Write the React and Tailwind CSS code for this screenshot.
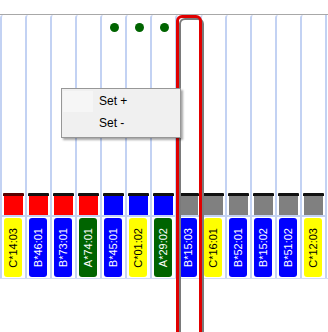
import React from "react";

const items = [
  { label: "C*14:03", pill: "bg-[#ffff00] text-black", bar: "bg-[#ff0000]", cap: "bg-[#5a0000]", dot: false },
  { label: "B*46:01", pill: "bg-[#0000ff] text-white", bar: "bg-[#ff0000]", cap: "bg-[#111111]", dot: false },
  { label: "B*73:01", pill: "bg-[#0000ff] text-white", bar: "bg-[#ff0000]", cap: "bg-[#111111]", dot: false },
  { label: "A*74:01", pill: "bg-[#006400] text-white", bar: "bg-[#ff0000]", cap: "bg-[#111111]", dot: false },
  { label: "B*45:01", pill: "bg-[#0000ff] text-white", bar: "bg-[#0000ff]", cap: "bg-[#111111]", dot: true },
  { label: "C*01:02", pill: "bg-[#ffff00] text-black", bar: "bg-[#0000ff]", cap: "bg-[#111111]", dot: true },
  { label: "A*29:02", pill: "bg-[#006400] text-white", bar: "bg-[#0000ff]", cap: "bg-[#111111]", dot: true },
  { label: "B*15:03", pill: "bg-[#0000ff] text-white", bar: "bg-[#808080]", cap: "bg-[#111111]", dot: false },
  { label: "C*16:01", pill: "bg-[#ffff00] text-black", bar: "bg-[#808080]", cap: "bg-[#111111]", dot: false },
  { label: "B*52:01", pill: "bg-[#0000ff] text-white", bar: "bg-[#808080]", cap: "bg-[#111111]", dot: false },
  { label: "B*15:02", pill: "bg-[#0000ff] text-white", bar: "bg-[#808080]", cap: "bg-[#111111]", dot: false },
  { label: "B*51:02", pill: "bg-[#0000ff] text-white", bar: "bg-[#808080]", cap: "bg-[#111111]", dot: false },
  { label: "C*12:03", pill: "bg-[#ffff00] text-black", bar: "bg-[#808080]", cap: "bg-[#111111]", dot: false },
];

function Column({ it }) {
  return (
    <div className="w-[25px] shrink-0 flex flex-col border-l-2 border-[#c3d2f3] rounded-tl-[3px]">
      <div className="h-[178px] flex justify-center pt-[8px]">
        {it.dot && <div className="w-[9px] h-[9px] rounded-full bg-[#006400] ml-[1px]" />}
      </div>
      <div className="h-[24px] flex flex-col border-b-2 border-[#c3d2f3] -ml-[2px] pl-[2px]">
        <div className={`w-[21px] h-[3px] ml-[1px] rounded-t-[1px] ${it.cap}`} />
        <div className={`w-[19px] h-[19px] ml-[2px] ${it.bar}`} />
      </div>
      <div className="h-[61px] pt-[1px]">
        <div
          className={`w-[18px] h-[59px] ml-[2px] rounded-[3px] flex items-center justify-center ${it.pill}`}
        >
          <span className="[writing-mode:vertical-rl] rotate-180 text-[11px] leading-none font-['Liberation_Sans',Arial,sans-serif] whitespace-nowrap">
            {it.label}
          </span>
        </div>
      </div>
    </div>
  );
}

export default function App() {
  return (
    <div className="relative w-[328px] h-[332px] overflow-hidden bg-white font-['Liberation_Sans',Arial,sans-serif]">
      <div className="h-[15px] border-b border-[#a8a8a8]" />
      <div className="flex h-[264px] border-b border-[#d3ddf6]">
        {items.map((it) => (
          <Column key={it.label} it={it} />
        ))}
        <div className="w-[3px] border-l-2 border-[#c3d2f3]" />
      </div>

      {/* highlight frame shadow */}
      <div className="absolute left-[179px] top-[18px] w-[25px] h-[330px] border-2 border-[#7a7a7a] rounded-t-[6px]" />
      {/* highlight frame */}
      <div className="absolute left-[176px] top-[15px] w-[26px] h-[330px] border-[3px] border-[#e10000] rounded-t-[6px]" />

      {/* context menu */}
      <div className="absolute left-[61px] top-[88px] w-[120px] h-[50px] bg-[#f0f0f0] border border-[#979797] shadow-[2px_2px_2px_rgba(0,0,0,0.35)] pt-[1px]">
        <div className="relative h-[22px] flex items-center pl-[37px] text-[12px] text-black">
          <div className="absolute left-[1px] top-[1px] w-[30px] h-[21px] bg-[#f6f6f6]" />
          <span className="relative">Set +</span>
        </div>
        <div className="h-[22px] flex items-center pl-[37px] text-[12px] text-black">
          <span>Set -</span>
        </div>
      </div>
    </div>
  );
}
